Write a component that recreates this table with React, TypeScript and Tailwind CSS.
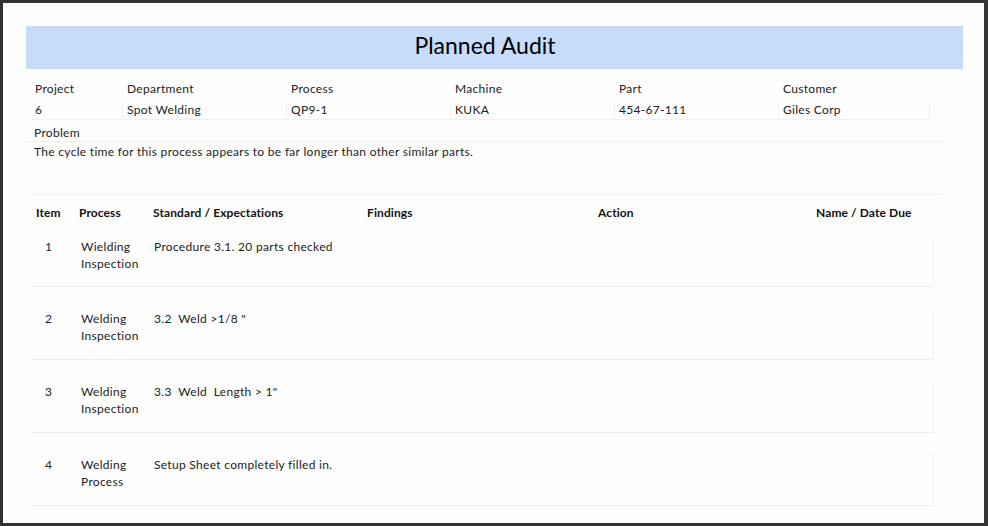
import React from 'react';

const info = [
  { label: 'Project', value: '6', w: 'w-[92px]' },
  { label: 'Department', value: 'Spot Welding', w: 'w-[164px]' },
  { label: 'Process', value: 'QP9-1', w: 'w-[164px]' },
  { label: 'Machine', value: 'KUKA', w: 'w-[164px]' },
  { label: 'Part', value: '454-67-111', w: 'w-[164px]' },
  { label: 'Customer', value: 'Giles Corp', w: 'w-[151px]' },
];

const items = [
  { n: '1', process: ['Wielding', 'Inspection'], standard: 'Procedure 3.1. 20 parts checked' },
  { n: '2', process: ['Welding', 'Inspection'], standard: '3.2  Weld >1/8 "' },
  { n: '3', process: ['Welding', 'Inspection'], standard: '3.3  Weld  Length > 1"' },
  { n: '4', process: ['Welding', 'Process'], standard: 'Setup Sheet completely filled in.' },
];

const cols = 'grid grid-cols-[47px_74px_214px_231px_218px_120px]';

export default function App() {
  return (
    <div
      className="w-[988px] h-[526px] bg-[#333333] pt-[3px] pl-[3px] pr-[4px] pb-[3px]"
      style={{ fontFamily: 'Lato, "Open Sans", sans-serif' }}
    >
      <div className="h-full bg-[#fefefe] pt-[23px] pl-[23px] pr-[21px] text-[12px] text-[#222] tracking-[0.3px]">
        {/* Title bar */}
        <div className="h-[43px] bg-[#c6dcfa] flex items-center justify-center">
          <h1 className="text-[23px] text-black leading-none pr-[19px] pb-[4px] tracking-normal">Planned Audit</h1>
        </div>

        {/* Header info */}
        <div className="flex pl-[5px] mt-[11px]">
          {info.map((c) => (
            <div key={c.label} className={`${c.w} shrink-0`}>
              <div className="h-[20px] pl-[4px] leading-[18px]">{c.label}</div>
              <div className="h-[20px] pl-[4px] leading-[19px] border-b border-r border-[#f0f0f0]">
                {c.value}
              </div>
            </div>
          ))}
        </div>

        {/* Problem */}
        <div className="pl-[8px] mt-[3px] w-[919px] border-b border-[#f0f0f0] h-[19px] leading-[20px]">
          Problem
        </div>
        <div className="pl-[8px] leading-[20px] h-[52px]">
          The cycle time for this process appears to be far longer than other similar parts.
        </div>

        {/* Items table */}
        <div className="ml-[4px] w-[912px] border-t border-[#f0f0f0]">
          <div className={`${cols} h-[37px] items-center font-bold text-[#111] tracking-[0.1px]`}>
            <div className="pl-[6px] pb-[2px]">Item</div>
            <div className="pl-[2px] pb-[2px]">Process</div>
            <div className="pl-[2px] pb-[2px]">Standard / Expectations</div>
            <div className="pl-[2px] pb-[2px]">Findings</div>
            <div className="pl-[2px] pb-[2px]">Action</div>
            <div className="pl-[2px] pb-[2px]">Name / Date Due</div>
          </div>
          {items.map((it, i) => (
            <div
              key={it.n}
              className={`${cols} w-[904px] border-b border-[#eeeeee] leading-[17px] ${
                i === 0 ? 'h-[55px] pt-[6px]' : 'h-[73px] pt-[23px]'
              }`}
            >
              <div className="pl-[15px]">{it.n}</div>
              <div className="pl-[4px]">
                {it.process.map((p) => (
                  <div key={p}>{p}</div>
                ))}
              </div>
              <div className="pl-[3px] whitespace-pre">{it.standard}</div>
              <div />
              <div />
              <div className="border-r border-[#f3f3f3] -mt-[3px] mb-[-1px]" />
            </div>
          ))}
        </div>
      </div>
    </div>
  );
}
